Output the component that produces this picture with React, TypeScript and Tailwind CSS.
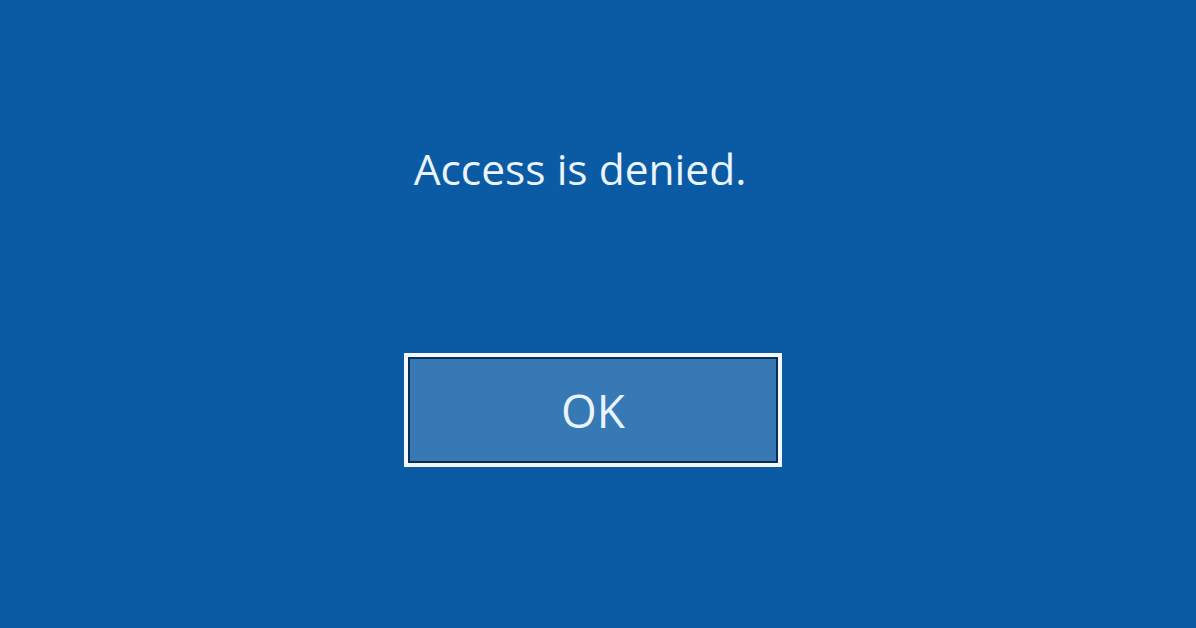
export default function App() {
    return (
        <div className="w-[1196px] h-[628px] bg-[#0b5aa4] flex flex-col items-center" style={{fontFamily: '"Open Sans", "Noto Sans", sans-serif'}}>
            <h1 className="mt-[139px] mr-[36px] text-[42.5px] leading-[60px] text-[#eaf4ff] font-normal">
                Access is denied.
            </h1>
            <button className="mt-[154px] mr-[10px] w-[378px] h-[114px] border-[4px] border-[#f4f8fc] bg-[#0a2f55] p-[2px] flex">
                <span className="flex-1 bg-[#3679b5] flex items-center justify-center text-[46px] text-[#eaf4ff]">
                    OK
                </span>
            </button>
        </div>
    );
}
